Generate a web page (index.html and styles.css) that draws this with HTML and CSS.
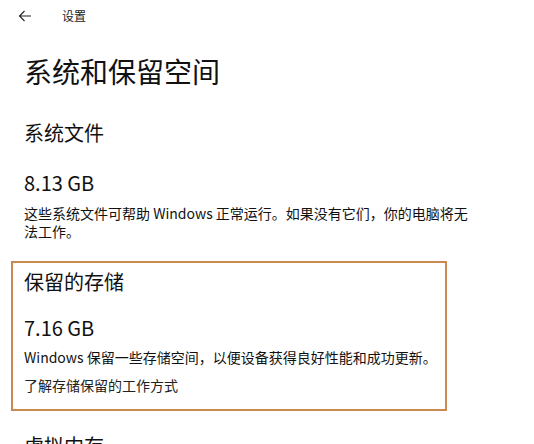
FILE: index.html
```html
<!DOCTYPE html>
<html lang="zh-CN">
<head>
<meta charset="utf-8">
<link rel="stylesheet" href="styles.css">
</head>
<body>
<div class="page">
  <header class="topbar">
    <svg class="back" width="14" height="12" viewBox="0 0 14 12"><path d="M13 6H1.5M6.5 1 1.5 6l5 5" fill="none" stroke="#222" stroke-width="1.1"/></svg>
    <span class="app">设置</span>
  </header>
  <h1 class="title">系统和保留空间</h1>
  <section class="block first">
    <h2 class="heading">系统文件</h2>
    <div class="size">8.13 GB</div>
    <p class="desc">这些系统文件可帮助 Windows 正常运行。如果没有它们，你的电脑将无法工作。</p>
  </section>
  <section class="block highlight">
    <h2 class="heading">保留的存储</h2>
    <div class="size">7.16 GB</div>
    <p class="desc">Windows 保留一些存储空间，以便设备获得良好性能和成功更新。</p>
    <a class="link">了解存储保留的工作方式</a>
  </section>
  <section class="block last">
    <h2 class="heading">虚拟内存</h2>
  </section>
</div>
</body>
</html>
```
FILE: styles.css
```css
html, body {
  margin: 0;
  padding: 0;
  background: #fff;
}
body {
  font-family: "Noto Sans CJK SC", "Open Sans", sans-serif;
  color: #111;
  width: 534px;
  height: 444px;
  overflow: hidden;
}
.page {
  padding: 0 0 0 24px;
}
.topbar {
  display: flex;
  align-items: center;
  height: 32px;
  margin-left: -6px;
}
.back {
  display: block;
}
.app {
  margin-left: 30px;
  font-size: 12px;
  line-height: 16px;
  color: #222;
}
.title {
  margin: 19px 0 0;
  font-size: 28px;
  font-weight: 400;
  line-height: 40px;
}
.heading {
  margin: 0;
  font-size: 20px;
  font-weight: 400;
  line-height: 28px;
}
.size {
  font-size: 20px;
  line-height: 28px;
}
.desc {
  margin: 0;
  width: 450px;
  font-size: 14px;
  line-height: 18px;
}
.first {
  margin-top: 28px;
}
.first .size {
  margin-top: 22px;
}
.first .desc {
  margin-top: 7px;
}
.highlight {
  margin: 21px 0 0 -13px;
  width: 408px;
  padding: 5px 13px 15px 11px;
  border: 2px solid #c98a52;
}
.highlight .size {
  margin-top: 18px;
}
.highlight .desc {
  margin-top: 6px;
}
.link {
  display: block;
  margin-top: 10px;
  font-size: 14px;
  line-height: 18px;
  color: #222;
}
.last {
  margin-top: 21px;
}
```
